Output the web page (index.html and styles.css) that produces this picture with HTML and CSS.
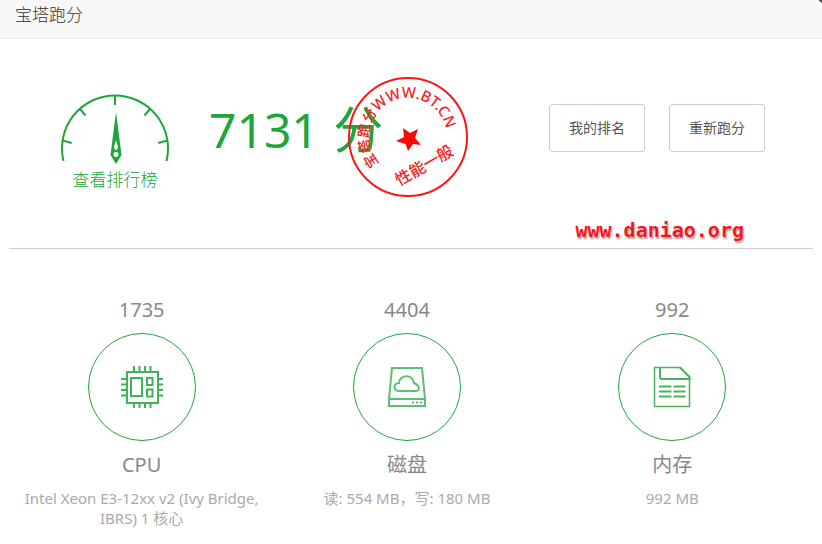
FILE: index.html
```html
<!DOCTYPE html>
<html lang="zh-CN">
<head>
<meta charset="utf-8">
<title>宝塔跑分</title>
<link rel="stylesheet" href="styles.css">
</head>
<body>
<main class="dialog">
  <header class="title-bar">
    <h1 class="title">宝塔跑分</h1>
    <button class="close" type="button" aria-label="关闭"></button>
  </header>
  <section class="summary">
    <a class="ranking" href="#">
      <svg class="gauge" width="110" height="72" viewBox="0 0 110 72" fill="none" stroke="#20a53a" stroke-width="2" aria-hidden="true">
        <path d="M3.500 67A53 53 0 1 1 106.500 67"/>
        <path d="M55 2V11M20 15L25.500 21.500M90 15L84.500 21.500M2.500 46.500L11.700 49M107.500 46.500L98.300 49"/>
        <path fill="#20a53a" stroke="none" fill-rule="evenodd" d="M56 18L61.500 61L56 70L50.500 61ZM56 46L54 53L55 56H57L58 53ZM56 58A2.500 2.500 0 1 0 56 63A2.500 2.500 0 1 0 56 58Z"/>
      </svg>
      <span>查看排行榜</span>
    </a>
    <div class="score">7131 <span class="unit">分</span>
      <svg class="stamp" width="122" height="122" viewBox="0 0 122 122" aria-hidden="true">
        <defs><path id="ring" d="M32.500 87.600A39 39 0 1 1 97.600 74.300"/></defs>
        <circle cx="61" cy="61" r="59" fill="none" stroke="#f81818" stroke-width="2"/>
        <text class="stamp-ring"><textPath href="#ring">宝塔跑分<tspan class="stamp-site">WWW.BT.CN</tspan></textPath></text>
        <path fill="#f80808" d="M56 52L63 57L71 53L68 62L74 69L66 68L61 75L58.500 68L49 65L57 61Z"/>
        <text class="stamp-grade" transform="translate(77 89) rotate(-30)" x="0" y="6">性能一般</text>
      </svg>
    </div>
    <div class="actions">
      <button class="action" type="button">我的排名</button>
      <button class="action" type="button">重新跑分</button>
    </div>
    <span class="site">www.daniao.org</span>
  </section>
  <section class="results">
    <article class="result">
      <div class="value">1735</div>
      <div class="disc">
        <svg width="42" height="42" viewBox="0 0 42 42" fill="none" stroke="#20a53a" stroke-width="2" opacity=".85" aria-hidden="true">
          <rect x="6" y="6" width="31" height="31"/><rect x="10" y="12" width="11" height="18"/><rect x="26" y="12" width="5.500" height="7"/><rect x="26" y="23.500" width="5.500" height="7"/>
          <path d="M13 0V5M18.500 0V5M24 0V5M29.500 0V5M13 37V42M18.500 37V42M24 37V42M29.500 37V42M0 13H5M0 18.500H5M0 24H5M0 29.500H5M37 13H42M37 18.500H42M37 24H42M37 29.500H42"/>
        </svg>
      </div>
      <h2 class="name">CPU</h2>
      <p class="detail">Intel Xeon E3-12xx v2 (Ivy Bridge, IBRS) 1 核心</p>
    </article>
    <article class="result">
      <div class="value">4404</div>
      <div class="disc">
        <svg width="38" height="42" viewBox="0 0 38 42" fill="none" stroke="#20a53a" stroke-width="2" opacity=".72" aria-hidden="true">
          <path d="M4 2H34L37 33V40H1V33ZM1 33H37"/>
          <path d="M11 25C5 25 5 17 11 17C11 9 24 7 26 17C31 19 33 25 28 25Z"/>
          <path d="M24 36.500H26M28 36.500H30M32 36.500H34"/>
        </svg>
      </div>
      <h2 class="name">磁盘</h2>
      <p class="detail">读: 554 MB，写: 180 MB</p>
    </article>
    <article class="result">
      <div class="value">992</div>
      <div class="disc">
        <svg width="38" height="42" viewBox="0 0 38 42" fill="none" stroke="#20a53a" stroke-width="2" opacity=".82" aria-hidden="true">
          <path stroke-width="1.500" d="M1.500 1.500H27L36.500 11V40.500H1.500Z"/>
          <path d="M7 1V11Q7 13 9 13H36.500V11L27 1.500"/>
          <path d="M6 20.500H18.500M20.500 20.500H32.500M6 25.500H18.500M20.500 25.500H32.500M6 30.500H18.500M20.500 30.500H32.500"/>
        </svg>
      </div>
      <h2 class="name">内存</h2>
      <p class="detail">992 MB</p>
    </article>
  </section>
</main>
</body>
</html>
```
FILE: styles.css
```css
* { box-sizing: border-box; }
body {
  margin: 0;
  background: #fff;
  color: #333;
  font: 14px/20px "Noto Sans", "Noto Sans CJK SC", sans-serif;
}
h1, h2, p { margin: 0; font-weight: 400; }
button { font: inherit; cursor: pointer; }
.dialog { overflow-x: clip; }
.title-bar {
  position: relative;
  overflow: hidden;
  padding: 3px 15px 11px;
  border-bottom: 1px solid #eee;
  background: #f8f8f8;
}
.title { font-size: 17px; line-height: 24px; font-weight: 300; }
.close {
  position: absolute;
  top: -30px;
  right: -29px;
  width: 40px;
  height: 40px;
  padding: 0;
  border: 4px solid #fff;
  border-radius: 50%;
  background: #555;
}
.summary {
  position: relative;
  display: flex;
  align-items: flex-start;
  min-height: 210px;
  margin: 0 9px;
  padding: 55px 48px 0 51px;
  border-bottom: 1px solid #ccccd8;
}
.ranking {
  display: flex;
  flex-direction: column;
  align-items: center;
  gap: 2px;
  color: #20a53a;
  font-size: 17px;
  line-height: 24px;
  font-weight: 300;
  text-decoration: none;
}
.gauge { display: block; }
.score {
  position: relative;
  margin-left: 39px;
  color: #20a53a;
  font-size: 48px;
  line-height: 70px;
  white-space: nowrap;
}
.unit { margin-left: 2px; font-size: 50px; }
.stamp { position: absolute; left: 138px; top: -18px; }
.stamp text { fill: #f82020; font-family: "Noto Sans", "Noto Sans CJK SC", sans-serif; }
.stamp-ring { font-size: 14px; font-weight: 500; }
.stamp-site { font-size: 15px; }
.stamp-grade { font-size: 16px; font-weight: 500; text-anchor: middle; }
.actions { display: flex; gap: 24px; margin: 10px 0 0 auto; }
.action {
  width: 96px;
  height: 48px;
  padding: 0;
  border: 1px solid #ccccd8;
  border-radius: 3px;
  background: #fff;
  color: #555;
  line-height: 20px;
}
.site {
  position: absolute;
  right: 69px;
  bottom: 4px;
  color: #f01820;
  font: bold 20px/28px "DejaVu Sans Mono", monospace;
  text-shadow: 0 0 1px #fff, 1px 2px 2px #999;
}
.results { display: grid; grid-template-columns: repeat(3, 33%); margin: 0 9px; padding-top: 47px; }
.result { padding: 0 14px; text-align: center; }
.value, .name { color: #888; font-size: 20px; line-height: 28px; }
.disc {
  display: flex;
  align-items: center;
  justify-content: center;
  width: 108px;
  height: 108px;
  margin: 9px auto 10px;
  border: 1px solid #20a53a;
  border-radius: 50%;
}
.detail { margin-top: 9px; color: #aaa; font-size: 15px; }
```
